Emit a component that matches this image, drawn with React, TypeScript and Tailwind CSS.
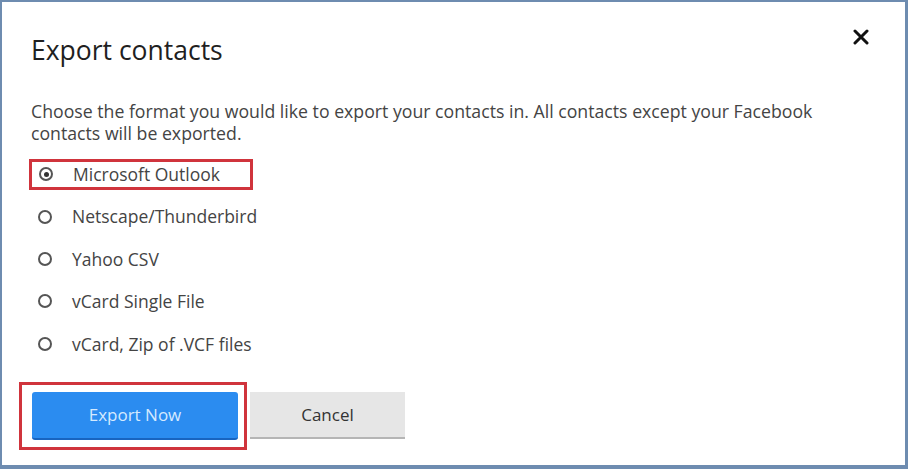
import { useState } from "react";

const options = [
  "Microsoft Outlook",
  "Netscape/Thunderbird",
  "Yahoo CSV",
  "vCard Single File",
  "vCard, Zip of .VCF files",
];

function Radio({ checked }: { checked: boolean }) {
  return (
    <span className="flex h-[14px] w-[14px] shrink-0 items-center justify-center rounded-full border-2 border-[#555]">
      {checked && <span className="h-[5px] w-[5px] rounded-full bg-[#333]" />}
    </span>
  );
}

export default function App() {
  const [selected, setSelected] = useState(0);

  return (
    <div
      className="h-[469px] w-[908px] overflow-hidden border-b-4 border-l-2 border-r-[3px] border-t-2 border-[#6e8cb0] bg-white text-[#333]"
      style={{ fontFamily: '"Open Sans", "Noto Sans", sans-serif' }}
    >
      <div className="relative px-[29px] pt-[30px]">
        <h1 className="text-[26.5px] leading-[36px] text-[#1f1f1f]">Export contacts</h1>

        <button className="absolute right-[36px] top-[27px] text-[#111]" aria-label="Close">
          <svg width="16" height="16" viewBox="0 0 16 16">
            <path d="M2 2 L14 14 M14 2 L2 14" stroke="currentColor" strokeWidth="3" strokeLinecap="round" />
          </svg>
        </button>

        <p className="mt-[32px] w-[840px] text-[17.7px] leading-[22px] text-[#444]">
          Choose the format you would like to export your contacts in. All contacts except your Facebook contacts
          will be exported.
        </p>

        <div className="mt-[9px] flex flex-col">
          {options.map((opt, i) => {
            const row = (
              <label
                className="flex h-[25px] cursor-pointer items-center gap-[20px] pl-[7px] text-[17.5px] text-[#444]"
                onClick={() => setSelected(i)}
              >
                <Radio checked={selected === i} />
                <span>{opt}</span>
              </label>
            );
            return (
              <div key={opt} className="flex h-[42.4px] items-center">
                {i === 0 ? (
                  <div className="-ml-[2px] w-[224px] border-[3px] border-[#d0343c] pr-2">{row}</div>
                ) : (
                  row
                )}
              </div>
            );
          })}
        </div>

        <div className="-ml-[12px] mt-[17px] flex items-center">
          <div className="border-[3px] border-[#d0343c] pb-[7px] pl-[10px] pr-[6px] pt-[7px]">
            <button className="h-[48px] w-[206px] rounded-[3px] border-b-2 border-[#1864c0] bg-[#2b8cf0] text-[17px] text-[#d4eaff]">
              Export Now
            </button>
          </div>
          <button className="ml-[3px] h-[47px] w-[155px] border-b-2 border-[#b5b5b5] bg-[#e6e6e6] text-[17px] text-[#333]">
            Cancel
          </button>
        </div>
      </div>
    </div>
  );
}
